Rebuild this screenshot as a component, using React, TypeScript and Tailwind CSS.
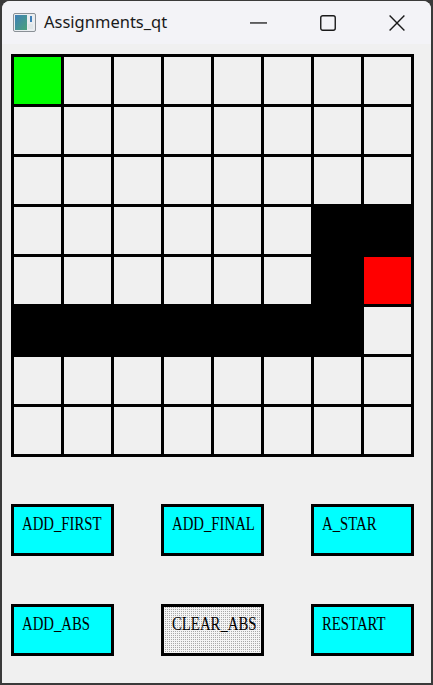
import React from 'react'

type Cell = 'empty' | 'start' | 'goal' | 'wall'

const ROWS = 8
const COLS = 8

function buildBoard(): Cell[][] {
  const board: Cell[][] = Array.from({ length: ROWS }, () => Array.from({ length: COLS }, () => 'empty' as Cell))
  board[0][0] = 'start'
  board[3][6] = 'wall'
  board[3][7] = 'wall'
  board[4][6] = 'wall'
  board[4][7] = 'goal'
  for (let c = 0; c < 7; c++) board[5][c] = 'wall'
  return board
}

const cellClass: Record<Cell, string> = {
  empty: 'bg-[#f0f0f0]',
  start: 'bg-[#00ff00]',
  goal: 'bg-[#ff0000]',
  wall: 'bg-black',
}

function AppIcon() {
  return (
    <svg width="23" height="19" viewBox="0 0 23 19">
      <defs>
        <linearGradient id="ic" x1="0" y1="0" x2="1" y2="1">
          <stop offset="0" stopColor="#3f7fb8" />
          <stop offset="1" stopColor="#4aa37a" />
        </linearGradient>
      </defs>
      <rect x="0.5" y="0.5" width="22" height="18" rx="1.5" fill="#e9edf0" stroke="#8a9096" />
      <rect x="2" y="2" width="12" height="15" fill="url(#ic)" />
      <rect x="17" y="3" width="2" height="6" fill="#3f7fb8" />
      <rect x="15" y="11" width="5" height="5" fill="#dfe6e8" />
    </svg>
  )
}

function TitleBar() {
  return (
    <div className="flex h-[43px] shrink-0 items-center bg-[#f3f3f7]">
      <div className="ml-[11px] flex items-center">
        <AppIcon />
      </div>
      <span className="ml-[8px] font-['Noto_Sans',sans-serif] text-[16.5px] leading-none text-[#1a1a1a]">Assignments_qt</span>
      <div className="ml-auto flex h-full">
        <div className="flex h-full w-[69px] items-center justify-center pt-[1px]">
          <svg width="17" height="2" viewBox="0 0 17 2">
            <rect x="0" y="0.3" width="17" height="1.3" fill="#1a1a1a" />
          </svg>
        </div>
        <div className="flex h-full w-[69px] items-center justify-center">
          <svg width="16" height="16" viewBox="0 0 16 16">
            <rect x="0.75" y="0.75" width="14.5" height="14.5" rx="2" fill="none" stroke="#1a1a1a" strokeWidth="1.4" />
          </svg>
        </div>
        <div className="flex h-full w-[69px] items-center justify-center">
          <svg width="16" height="16" viewBox="0 0 16 16">
            <path d="M0.6 0.6 L15.4 15.4 M15.4 0.6 L0.6 15.4" stroke="#1a1a1a" strokeWidth="1.4" />
          </svg>
        </div>
      </div>
    </div>
  )
}

function Board() {
  const board = buildBoard()
  return (
    <div className="grid w-[403px] grid-cols-8 gap-[3px] bg-black p-[3px]">
      {board.flat().map((cell, i) => (
        <div key={i} className={`h-[47px] ${cellClass[cell]}`} />
      ))}
    </div>
  )
}

function ActionButton({ label, dotted }: { label: string; dotted?: boolean }) {
  const bg = dotted
    ? 'bg-[#f4f4f4] bg-[repeating-conic-gradient(#a8a8a8_0_25%,#f4f4f4_0_100%)] bg-[length:2px_2px]'
    : 'bg-[#00ffff]'
  return (
    <button className={`h-[52px] w-[103px] border-[3px] border-black text-left ${bg}`}>
      <div className="h-full pl-[8px] pt-[5px]">
        <span className="inline-block origin-left scale-x-[0.82] whitespace-nowrap font-['Liberation_Serif',serif] text-[18px] leading-none text-black">
          {label}
        </span>
      </div>
    </button>
  )
}

export default function App() {
  return (
    <div className="h-[685px] w-[433px] bg-[#3a3a3a] px-[2px] pb-[2px] pt-px">
      <div className="flex h-full flex-col overflow-hidden rounded-t-[8px] bg-[#f0f0f0]">
        <TitleBar />
        <div className="pl-[9px] pt-[10px]">
          <Board />

          <div className="mt-[47px] flex w-[403px] justify-between">
            <ActionButton label="ADD_FIRST" />
            <ActionButton label="ADD_FINAL" />
            <ActionButton label="A_STAR" />
          </div>

          <div className="mt-[48px] flex w-[403px] justify-between">
            <ActionButton label="ADD_ABS" />
            <ActionButton label="CLEAR_ABS" dotted />
            <ActionButton label="RESTART" />
          </div>
        </div>
      </div>
    </div>
  )
}
